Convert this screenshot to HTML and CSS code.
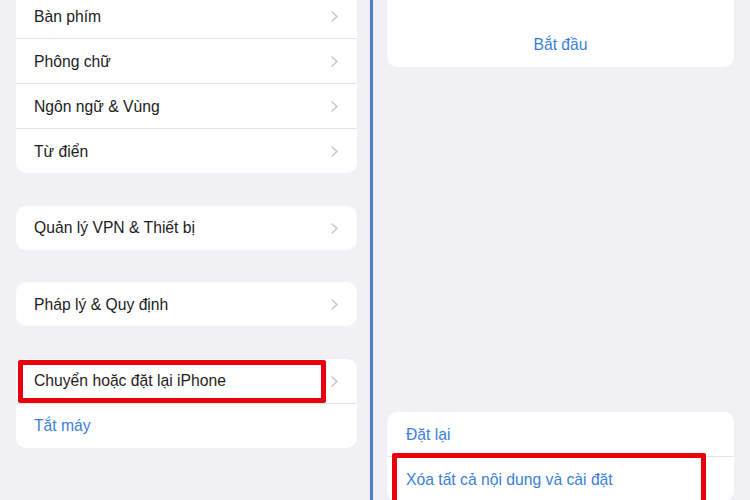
FILE: index.html
```html
<!DOCTYPE html>
<html lang="vi">
<head>
<meta charset="utf-8">
<title>Cài đặt chung</title>
<link rel="stylesheet" href="styles.css">
</head>
<body>
<div class="screen">
  <section class="panel left">
    <div class="card first">
      <div class="row"><span class="label">Bàn phím</span><svg class="chev" width="7" height="11" viewBox="0 0 7 11"><path d="M1 1 L6 5.5 L1 10" fill="none" stroke="#c7c7cb" stroke-width="1.6" stroke-linecap="round" stroke-linejoin="round"/></svg></div>
      <div class="row"><span class="label">Phông chữ</span><svg class="chev" width="7" height="11" viewBox="0 0 7 11"><path d="M1 1 L6 5.5 L1 10" fill="none" stroke="#c7c7cb" stroke-width="1.6" stroke-linecap="round" stroke-linejoin="round"/></svg></div>
      <div class="row"><span class="label">Ngôn ngữ &amp; Vùng</span><svg class="chev" width="7" height="11" viewBox="0 0 7 11"><path d="M1 1 L6 5.5 L1 10" fill="none" stroke="#c7c7cb" stroke-width="1.6" stroke-linecap="round" stroke-linejoin="round"/></svg></div>
      <div class="row"><span class="label">Từ điển</span><svg class="chev" width="7" height="11" viewBox="0 0 7 11"><path d="M1 1 L6 5.5 L1 10" fill="none" stroke="#c7c7cb" stroke-width="1.6" stroke-linecap="round" stroke-linejoin="round"/></svg></div>
    </div>
    <div class="card">
      <div class="row"><span class="label">Quản lý VPN &amp; Thiết bị</span><svg class="chev" width="7" height="11" viewBox="0 0 7 11"><path d="M1 1 L6 5.5 L1 10" fill="none" stroke="#c7c7cb" stroke-width="1.6" stroke-linecap="round" stroke-linejoin="round"/></svg></div>
    </div>
    <div class="card">
      <div class="row"><span class="label">Pháp lý &amp; Quy định</span><svg class="chev" width="7" height="11" viewBox="0 0 7 11"><path d="M1 1 L6 5.5 L1 10" fill="none" stroke="#c7c7cb" stroke-width="1.6" stroke-linecap="round" stroke-linejoin="round"/></svg></div>
    </div>
    <div class="card">
      <div class="row marked"><span class="label">Chuyển hoặc đặt lại iPhone</span><svg class="chev" width="7" height="11" viewBox="0 0 7 11"><path d="M1 1 L6 5.5 L1 10" fill="none" stroke="#c7c7cb" stroke-width="1.6" stroke-linecap="round" stroke-linejoin="round"/></svg><span class="hl hl-left"></span></div>
      <div class="row"><span class="label link">Tắt máy</span></div>
    </div>
  </section>
  <div class="divider"></div>
  <section class="panel right">
    <div class="card intro">
      <div class="row center"><span class="label link">Bắt đầu</span></div>
    </div>
    <div class="card actions">
      <div class="row"><span class="label link">Đặt lại</span></div>
      <div class="row marked"><span class="label link">Xóa tất cả nội dung và cài đặt</span><span class="hl hl-right"></span></div>
    </div>
  </section>
</div>
</body>
</html>
```
FILE: styles.css
```css
* { box-sizing: border-box; }
html, body {
  margin: 0;
  padding: 0;
  width: 750px;
  height: 500px;
  overflow: hidden;
  background: #f0f0f5;
  font-family: "Liberation Sans", Arial, sans-serif;
}
.screen {
  display: flex;
  width: 750px;
  height: 500px;
}
.panel {
  display: flex;
  flex-direction: column;
  background: #f0f0f5;
}
.left {
  width: 370px;
  padding: 0 13px 0 16px;
  gap: 32.5px;
}
.divider {
  width: 3px;
  background: #4f7fcc;
}
.right {
  width: 377px;
  padding: 0 16px 0 14px;
}
.card {
  background: #ffffff;
  border-radius: 10px;
  display: flex;
  flex-direction: column;
}
.card.first {
  margin-top: -6px;
}
.row {
  position: relative;
  height: 44px;
  display: flex;
  align-items: center;
  justify-content: space-between;
  padding: 1px 19px 0 18px;
}
.row + .row {
  height: 45px;
  border-top: 1px solid #e3e3e8;
}
.label {
  font-size: 15.7px;
  color: #1c1c1e;
}
.link {
  color: #3a7fdb;
}
.chev {
  flex: none;
}
.right .row {
  padding-left: 19px;
}
.row.center {
  justify-content: center;
}
.intro {
  margin-top: -40px;
  padding-top: 62px;
  padding-bottom: 1px;
}
.actions {
  margin-top: 345px;
}
.hl {
  position: absolute;
  border: 5px solid #e8000b;
  border-radius: 2px;
  pointer-events: none;
}
.hl-left {
  left: 2px;
  top: 1px;
  width: 308px;
  height: 43px;
}
.hl-right {
  left: 5px;
  top: -4px;
  width: 314px;
  height: 56px;
}
```
